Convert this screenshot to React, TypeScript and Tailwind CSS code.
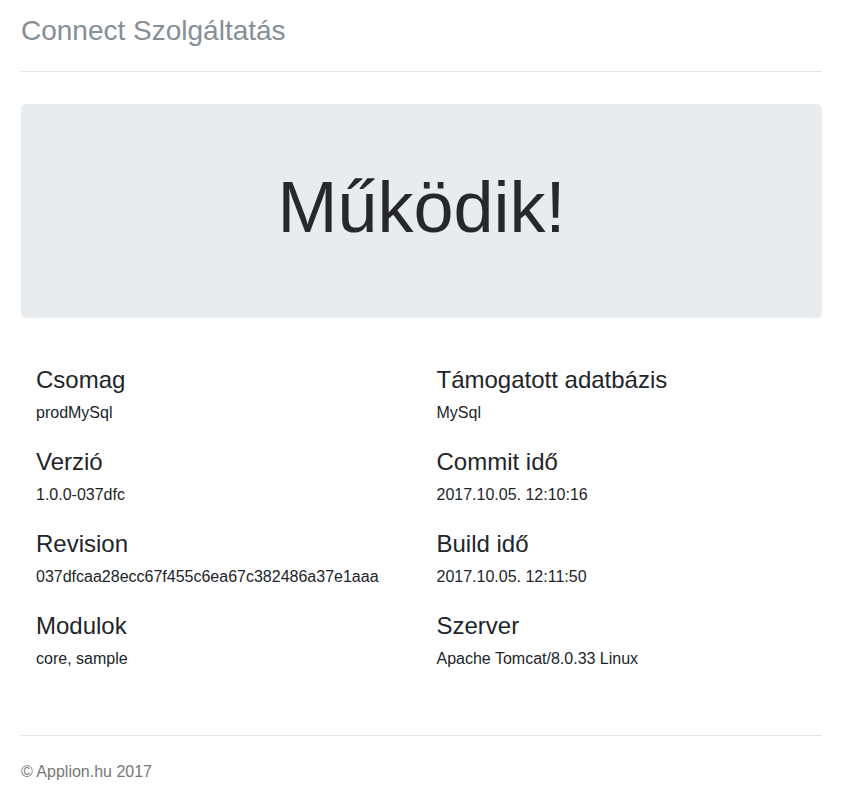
import React from 'react';

const leftItems = [
  { label: 'Csomag', value: 'prodMySql' },
  { label: 'Verzió', value: '1.0.0-037dfc' },
  { label: 'Revision', value: '037dfcaa28ecc67f455c6ea67c382486a37e1aaa' },
  { label: 'Modulok', value: 'core, sample' },
];

const rightItems = [
  { label: 'Támogatott adatbázis', value: 'MySql' },
  { label: 'Commit idő', value: '2017.10.05. 12:10:16' },
  { label: 'Build idő', value: '2017.10.05. 12:11:50' },
  { label: 'Szerver', value: 'Apache Tomcat/8.0.33 Linux' },
];

const InfoColumn: React.FC<{ items: { label: string; value: string }[] }> = ({ items }) => (
  <div className="px-[15px]">
    {items.map((item) => (
      <div key={item.label} className="pb-[23px]">
        <h4 className="text-[24px] leading-[28px] font-normal mb-[7px]">{item.label}</h4>
        <p className="text-[16px] leading-[24px]">{item.value}</p>
      </div>
    ))}
  </div>
);

export default function App() {
  return (
    <div
      className="min-h-[800px] bg-white text-[#212529]"
      style={{ fontFamily: '"Liberation Sans", Arial, sans-serif' }}
    >
      <div className="px-[21px] pt-[14px]">
        {/* Header */}
        <div className="border-b border-[#e5e5e5] pb-[15px]">
          <h3 className="text-[28px] leading-[34px] font-normal text-[#868e96] mb-[8px]">
            Connect Szolgáltatás
          </h3>
        </div>

        {/* Jumbotron */}
        <div className="mt-[32px] bg-[#e9ecef] rounded-[5px] h-[214px] pb-[8px] flex items-center justify-center">
          <h1 className="text-[72px] leading-[86px] font-light text-[#26282b]">Működik!</h1>
        </div>

        {/* Info */}
        <div className="grid grid-cols-2 pt-[48px] pb-[41px]">
          <InfoColumn items={leftItems} />
          <InfoColumn items={rightItems} />
        </div>

        {/* Footer */}
        <footer className="border-t border-[#e5e5e5] pt-[24px] pb-[16px]">
          <p className="text-[16px] leading-[24px] text-[#777777]">© Applion.hu 2017</p>
        </footer>
      </div>
    </div>
  );
}
